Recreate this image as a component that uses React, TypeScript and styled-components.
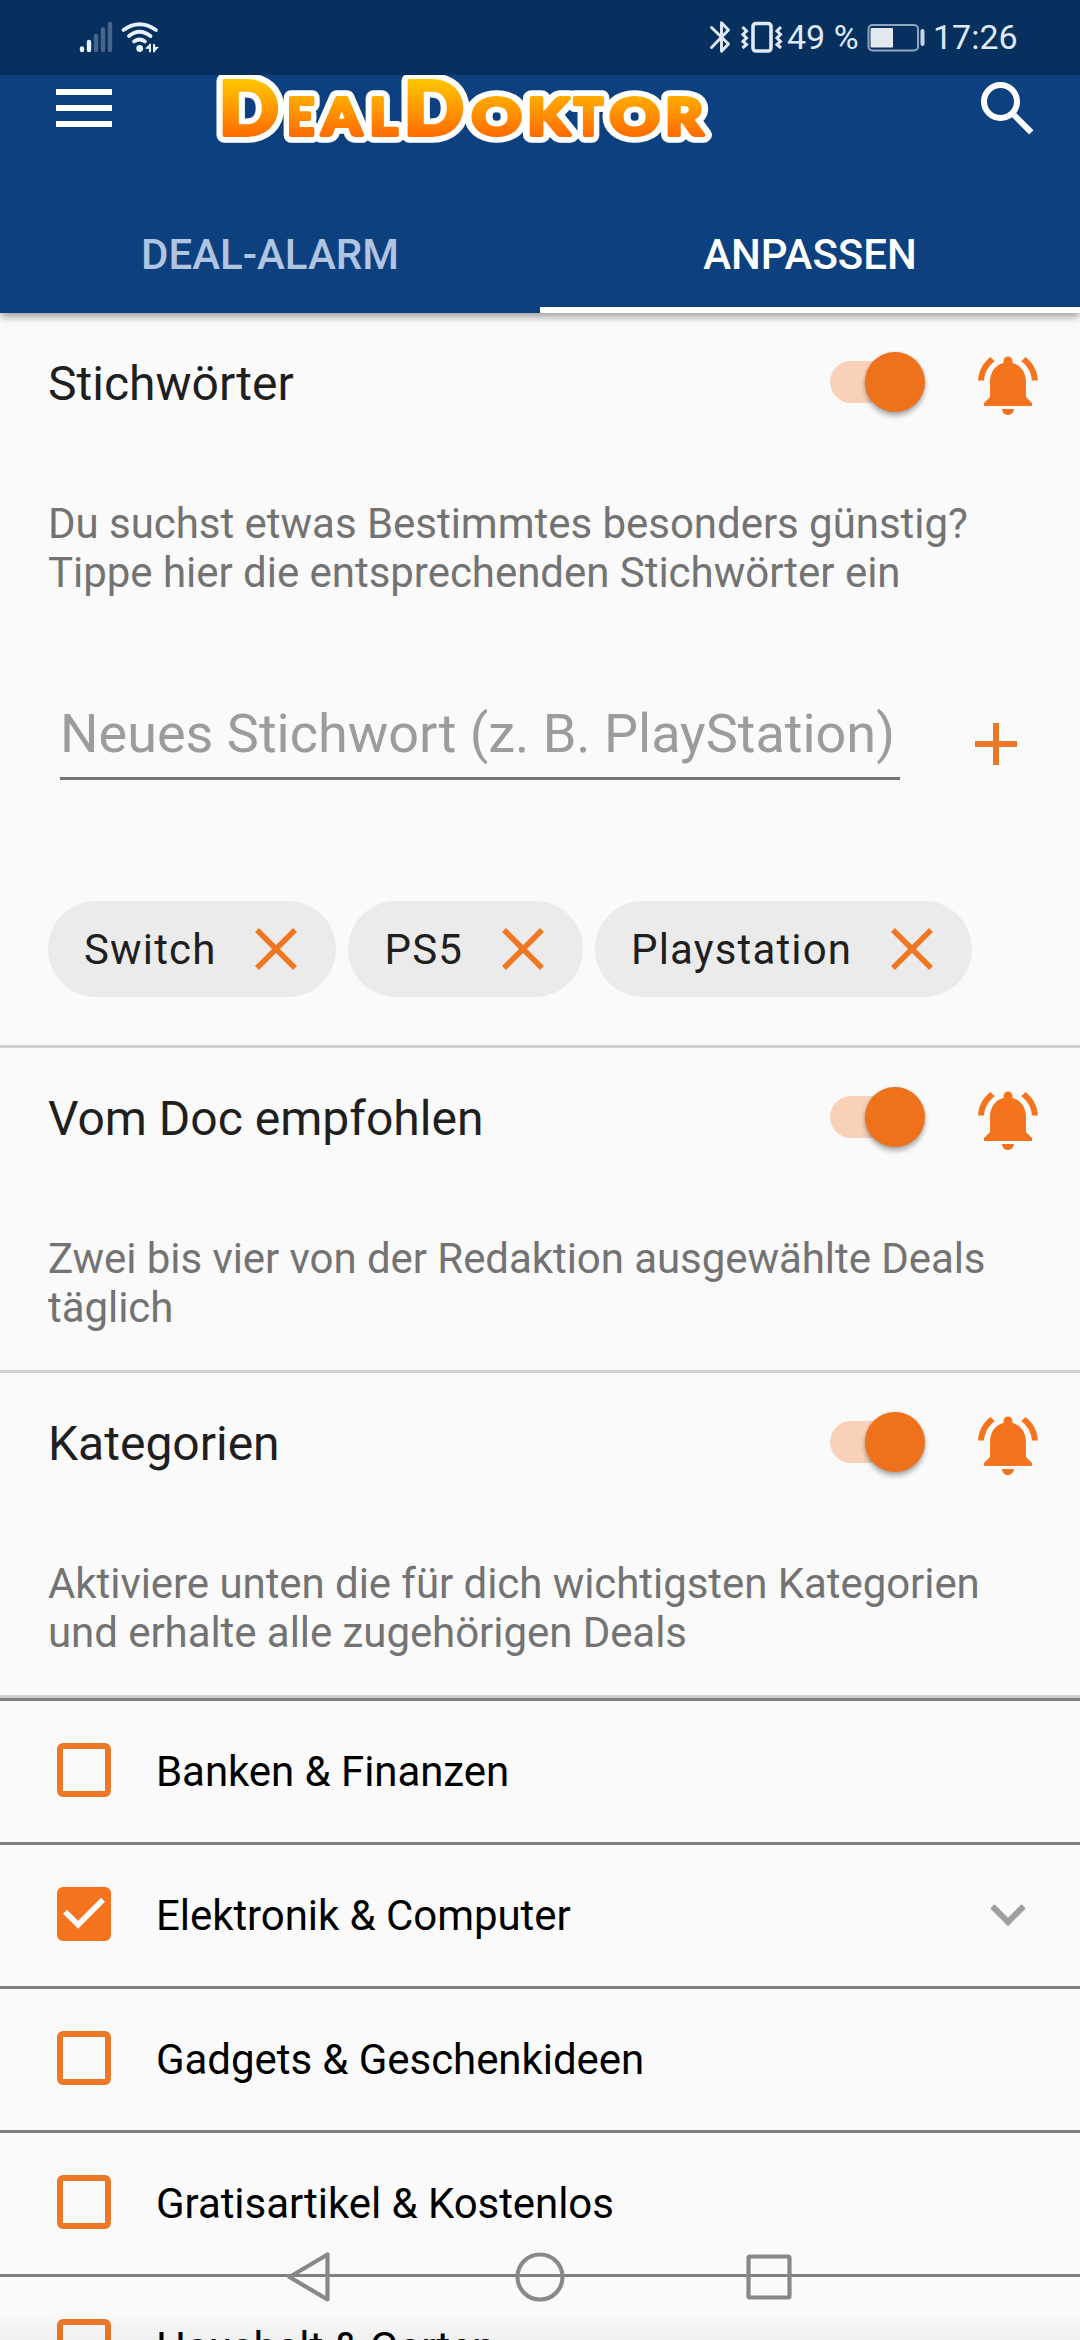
import React from 'react';
import styled, { createGlobalStyle } from 'styled-components';

const ORANGE = '#f4731c';

const GlobalStyle = createGlobalStyle`
  * { box-sizing: border-box; }
  body {
    margin: 0;
    background: #fafafa;
    font-family: Roboto, 'Noto Sans', sans-serif;
    overflow: hidden;
  }
`;

const Screen = styled.div`
  position: relative;
  width: 1080px;
  height: 2340px;
  overflow: hidden;
  display: flex;
  flex-direction: column;
  background: #fafafa;
`;

const StatusBar = styled.div`
  position: relative;
  z-index: 2;
  flex: none;
  display: flex;
  align-items: center;
  justify-content: space-between;
  height: 75px;
  background: #07305e;
`;

const StatusIcons = styled.svg`
  display: block;
  flex: none;
`;

const StatusRight = styled.div`
  display: flex;
  align-items: center;
  width: 372px;
  color: #dfe9f8;
  font-size: 34px;
  line-height: 77px;
`;

const StatusText = styled.span<{ $width: number }>`
  width: ${(p) => p.$width}px;
  white-space: nowrap;
`;

const Header = styled.header`
  position: relative;
  z-index: 1;
  flex: none;
  height: 238px;
  background: #0d407e;
  box-shadow: 0 3px 9px rgba(0, 0, 0, 0.42);
  display: flex;
  flex-direction: column;
`;

const Toolbar = styled.div`
  height: 121px;
  display: flex;
  align-items: flex-start;
  padding-left: 56px;
`;

const LogoSvg = styled.svg`
  display: block;
  margin-left: 104px;
  overflow: visible;
`;

const SearchIcon = styled.svg`
  display: block;
  margin: 7px 0 0 264px;
`;

const MenuIcon = styled.div`
  width: 56px;
  margin-top: 14px;
  display: grid;
  gap: 10px;
`;

const MenuBar = styled.span`
  height: 6px;
  background: #fff;
`;

const Tabs = styled.nav`
  display: grid;
  grid-template-columns: 1fr 1fr;
  height: 117px;
`;

const Tab = styled.div<{ $active?: boolean }>`
  display: flex;
  justify-content: center;
  padding-top: 34px;
  font-size: 42px;
  font-weight: 500;
  line-height: 49px;
  color: ${(p) => (p.$active ? '#fff' : '#b1c5e0')};
  border-bottom: 6px solid ${(p) => (p.$active ? '#fff' : 'transparent')};
`;

const Section = styled.section<{ $height: number }>`
  flex: none;
  height: ${(p) => p.$height}px;
  border-bottom: 3px solid #d0d0d0;
  display: flex;
  flex-direction: column;
`;

const SectionHead = styled.div`
  display: flex;
  align-items: center;
  height: 138px;
  padding: 0 36px 0 48px;
`;

const Title = styled.h2`
  flex: 1;
  margin: 3px 0 0;
  font-size: 48px;
  line-height: 56px;
  font-weight: 400;
  color: #1f1f1f;
`;

const Track = styled.div`
  width: 90px;
  height: 42px;
  border-radius: 21px;
  background: #f8d1b8;
  display: flex;
  align-items: center;
  justify-content: flex-end;
  margin: 0 52px 0 0;
`;

const Thumb = styled.div`
  flex: none;
  width: 60px;
  height: 60px;
  border-radius: 50%;
  margin-right: -5px;
  background: #ee711c;
  box-shadow: 0 4px 5px rgba(0, 0, 0, 0.3), 0 0 3px rgba(0, 0, 0, 0.12);
`;

const BellIcon = styled.svg`
  display: block;
  flex: none;
  margin-top: 6px;
`;

const Description = styled.p<{ $spacing?: number }>`
  margin: 48px 48px 0;
  font-size: 42px;
  line-height: 49px;
  letter-spacing: ${(p) => p.$spacing ?? -0.06}px;
  color: #737373;
  white-space: pre-line;
`;

const InputRow = styled.div`
  display: flex;
  margin: 92px 0 0 60px;
`;

const Field = styled.div`
  width: 840px;
  height: 91px;
  border-bottom: 3px solid #757575;
  font-size: 54px;
  line-height: 89px;
  color: #9c9c9c;
  white-space: nowrap;
`;

const AddIcon = styled.svg`
  display: block;
  margin: 34px 0 0 75px;
`;

const Chips = styled.div`
  display: flex;
  gap: 12px;
  margin: 121px 0 0 48px;
`;

const Chip = styled.div`
  display: flex;
  align-items: center;
  justify-content: space-between;
  height: 96px;
  border-radius: 48px;
  padding: 0 39px 0 36px;
  background: #ebebeb;
  font-size: 42px;
  letter-spacing: 1.15px;
  color: #1f1f1f;
  gap: 39px;
`;

const Row = styled.div`
  flex: none;
  display: flex;
  align-items: center;
  height: 144px;
  padding: 0 48px 0 57px;
  border-top: 3px solid #808080;
`;

const Box = styled.span<{ $checked?: boolean }>`
  flex: none;
  width: 54px;
  height: 54px;
  margin-top: -3px;
  border: 6px solid ${(p) => (p.$checked ? ORANGE : '#eb7829')};
  border-radius: 6px;
  background: ${(p) => (p.$checked ? ORANGE : 'transparent')};
`;

const CheckMark = styled.svg`
  display: block;
`;

const RowLabel = styled.span`
  flex: 1;
  margin-left: 45px;
  font-size: 42px;
  line-height: 49px;
  letter-spacing: -0.06px;
  color: #000;
`;

const NavOverlay = styled.div`
  position: absolute;
  left: 0;
  right: 0;
  bottom: 0;
  height: 126px;
  background: linear-gradient(to bottom, transparent 78%, rgba(0, 0, 0, 0.045) 100%);
`;

function Bell() {
  return (
    <BellIcon width="72" height="72" viewBox="0 0 24 24" fill={ORANGE}>
      <path d="M7.58 4.08L6.15 2.65C3.75 4.48 2.17 7.3 2.03 10.5h2c.15-2.65 1.51-4.97 3.55-6.42zm12.39 6.42h2c-.15-3.2-1.73-6.02-4.12-7.85l-1.42 1.43c2.02 1.45 3.39 3.77 3.54 6.42zM18 11c0-3.07-1.64-5.64-4.5-6.32V4c0-.83-.67-1.5-1.5-1.5s-1.5.67-1.5 1.5v.68C7.63 5.36 6 7.92 6 11v5l-2 2v1h16v-1l-2-2v-5zm-6 11c.14 0 .27-.01.4-.04.65-.14 1.18-.58 1.44-1.18.1-.24.15-.5.15-.78h-4c.01 1.1.9 2 2.01 2z" />
    </BellIcon>
  );
}

function Head({ title }: { title: string }) {
  return (
    <SectionHead>
      <Title>{title}</Title>
      <Track>
        <Thumb />
      </Track>
      <Bell />
    </SectionHead>
  );
}

const chips = ['Switch', 'PS5', 'Playstation'];

const rows = [
  { label: 'Banken & Finanzen' },
  { label: 'Elektronik & Computer', checked: true },
  { label: 'Gadgets & Geschenkideen' },
  { label: 'Gratisartikel & Kostenlos' },
  { label: 'Haushalt & Garten' },
];

// Word mark letters: [letter, left edge, right edge, font size]
const letters: [string, number, number, number][] = [
  ['D', 8, 61, 74.5],
  ['E', 74, 97, 51],
  ['A', 105, 147, 51],
  ['L', 157, 181, 51],
  ['D', 193, 246, 74.5],
  ['O', 257, 304, 51],
  ['K', 315, 355, 51],
  ['T', 358, 387, 51],
  ['O', 395, 442, 51],
  ['R', 453, 488, 51],
];

// Stretches each glyph so that its ink spans exactly the wanted edges.
function fitLetters() {
  const ctx = document.createElement('canvas').getContext('2d')!;
  return letters.map(([char, left, right, size]) => {
    ctx.font = `900 ${size}px Lato`;
    const m = ctx.measureText(char);
    const scale = (right - left) / (m.actualBoundingBoxRight + m.actualBoundingBoxLeft);
    return { char, size, x: left + m.actualBoundingBoxLeft * scale, width: m.width * scale };
  });
}

function Logo() {
  const glyphs = React.useMemo(fitLetters, []);
  const text = (props: React.SVGProps<SVGTextElement>) => (
    <text {...props} fontFamily="Lato, sans-serif" fontWeight="900" strokeLinejoin="round">
      {glyphs.map((g, i) => (
        <tspan key={i} x={g.x} y="59.500" fontSize={g.size} textLength={g.width} lengthAdjust="spacingAndGlyphs">
          {g.char}
        </tspan>
      ))}
    </text>
  );
  return (
    <LogoSvg width="500" height="72" viewBox="0 0 500 72">
      <defs>
        <linearGradient id="logoFill" gradientUnits="userSpaceOnUse" x1="0" y1="4" x2="0" y2="62">
          <stop offset="0" stopColor="#ffc800" />
          <stop offset="1" stopColor="#ff6a00" />
        </linearGradient>
      </defs>
      {text({ fill: '#fff', stroke: '#fff', strokeWidth: 15.5 })}
      {text({ fill: 'url(#logoFill)', stroke: 'url(#logoFill)', strokeWidth: 4 })}
    </LogoSvg>
  );
}

export default function App() {
  return (
    <Screen>
      <GlobalStyle />
      <StatusBar>
        <StatusIcons width="180" height="75" viewBox="0 0 180 75">
          <g strokeWidth="4.4" strokeLinecap="round" fill="none">
            <path d="M82 48.5v1.5M89 42v8" stroke="#e6f0ff" />
            <path d="M96 36v14M103 29.500v20.500M110 24v26" stroke="#46668c" />
            <path d="M123.500 30Q139.500 18.500 156 30M129 36Q139.500 27.500 150.500 36M134 41.500Q139.500 37.500 145 41.500" stroke="#e6f0ff" strokeWidth="3.800" />
          </g>
          <circle cx="139.700" cy="48.500" r="3.400" fill="#e6f0ff" />
          <path d="M145 48.500l4-3.700v-1h2v8.500h-2v-3.300zM153 44h2v2.700l4 .3-4 4.200v1h-2z" fill="#e6f0ff" />
        </StatusIcons>
        <StatusRight>
          <StatusIcons width="79" height="75" viewBox="0 0 79 75" fill="none" stroke="#dfe9f8">
            <path d="M3.500 27.500L20.500 44 13.500 51.300V22.700l7 7.300L3.500 47.500" strokeWidth="2.900" strokeLinejoin="round" strokeLinecap="round" />
            <rect x="45" y="23.500" width="18" height="27.500" rx="3" strokeWidth="3.600" />
            <path d="M34.500 27l4 4-3.500 3.500 3.500 3.500-3.500 3.500 3.500 3-4 3.500M73 27l-4 4 3.500 3.500-3.500 3.500 3.500 3.500-3.500 3 4 3.500" strokeWidth="3" />
          </StatusIcons>
          <StatusText $width={79}>49 %</StatusText>
          <StatusIcons width="67" height="75" viewBox="0 0 67 75">
            <rect x="2.500" y="25" width="49.500" height="25.500" rx="4" fill="none" stroke="#8fa5c0" strokeWidth="2" />
            <rect x="4.500" y="28" width="22.500" height="19.500" rx="1" fill="#e4e9f0" />
            <rect x="54.500" y="29" width="4" height="17" rx="2" fill="#c9d5e6" />
          </StatusIcons>
          <StatusText $width={90}>17:26</StatusText>
        </StatusRight>
      </StatusBar>
      <Header>
        <Toolbar>
          <MenuIcon>
            <MenuBar />
            <MenuBar />
            <MenuBar />
          </MenuIcon>
          <Logo />
          <SearchIcon width="54" height="54" viewBox="0 0 54 54" fill="none" stroke="#fff" strokeWidth="6">
            <circle cx="20.500" cy="19.500" r="16.500" />
            <path d="M34 33l17.300 17.300" />
          </SearchIcon>
        </Toolbar>
        <Tabs>
          <Tab>DEAL-ALARM</Tab>
          <Tab $active>ANPASSEN</Tab>
        </Tabs>
      </Header>
      <Section $height={735}>
        <Head title="Stichwörter" />
        <Description $spacing={-0.03}>{'Du suchst etwas Bestimmtes besonders günstig?\nTippe hier die entsprechenden Stichwörter ein'}</Description>
        <InputRow>
          <Field>Neues Stichwort (z. B. PlayStation)</Field>
          <AddIcon width="42" height="42" viewBox="0 0 42 42" stroke="#eb7829" strokeWidth="6">
            <path d="M21 0v42M0 21h42" />
          </AddIcon>
        </InputRow>
        <Chips>
          {chips.map((chip) => (
            <Chip key={chip}>
              {chip}
              <svg width="42" height="42" viewBox="0 0 42 42" stroke="#ef7724" strokeWidth="5.500">
                <path d="M2 2l38 38M40 2L2 40" />
              </svg>
            </Chip>
          ))}
        </Chips>
      </Section>
      <Section $height={325}>
        <Head title="Vom Doc empfohlen" />
        <Description>{'Zwei bis vier von der Redaktion ausgewählte Deals\ntäglich'}</Description>
      </Section>
      <Section $height={325}>
        <Head title="Kategorien" />
        <Description>{'Aktiviere unten die für dich wichtigsten Kategorien\nund erhalte alle zugehörigen Deals'}</Description>
      </Section>
      {rows.map((row) => (
        <Row key={row.label}>
          <Box $checked={row.checked}>
            {row.checked && (
              <CheckMark width="42" height="42" viewBox="0 0 42 42" fill="none" stroke="#fafafa" strokeWidth="5.500">
                <path d="M2 18.700l13.100 13.100L40 6.700" />
              </CheckMark>
            )}
          </Box>
          <RowLabel>{row.label}</RowLabel>
          {row.checked && (
            <svg width="48" height="48" viewBox="0 0 48 48" fill="none" stroke="#9e9e9e" strokeWidth="6">
              <path d="M8.400 14.300l15.600 15.600 15.600-15.600" />
            </svg>
          )}
        </Row>
      ))}
      <NavOverlay>
        <svg width="1080" height="126" viewBox="0 0 1080 126" fill="none" stroke="#888" strokeWidth="4.200" strokeLinejoin="round">
          <path d="M289.500 63L327.500 40.500v45z" />
          <circle cx="540" cy="63" r="22.500" />
          <rect x="748.500" y="42.500" width="41" height="41" rx="1.500" />
        </svg>
      </NavOverlay>
    </Screen>
  );
}
